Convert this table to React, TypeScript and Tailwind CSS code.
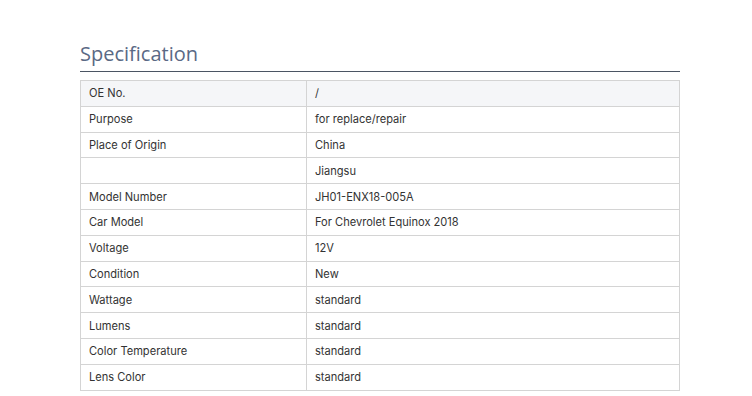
const specs: [string, string][] = [
  ['OE No.', '/'],
  ['Purpose', 'for replace/repair'],
  ['Place of Origin', 'China'],
  ['', 'Jiangsu'],
  ['Model Number', 'JH01-ENX18-005A'],
  ['Car Model', 'For Chevrolet Equinox 2018'],
  ['Voltage', '12V'],
  ['Condition', 'New'],
  ['Wattage', 'standard'],
  ['Lumens', 'standard'],
  ['Color Temperature', 'standard'],
  ['Lens Color', 'standard'],
];

export default function App() {
  return (
    <main className="min-h-screen bg-white pt-[38px]">
      <div className="w-[600px] ml-[80px]">
        <h2 className="text-[20px] leading-[32px] text-[#5a6985] pb-[1px] border-b border-[#4b5563] font-['Open_Sans',sans-serif]">
          Specification
        </h2>
        <table className="w-full mt-[8px] border-collapse font-['Inter',sans-serif] text-[11.1px] text-[#333]">
          <tbody>
            {specs.map(([k, v], i) => (
              <tr key={i} className={i === 0 ? 'bg-[#f5f6f8]' : ''}>
                <td className="w-[226px] border border-[#d4d4d4] px-[8px] h-[25.8px] leading-[16px]">{k}</td>
                <td className="border border-[#d4d4d4] px-[8px] h-[25.8px] leading-[16px]">{v}</td>
              </tr>
            ))}
          </tbody>
        </table>
      </div>
    </main>
  );
}
